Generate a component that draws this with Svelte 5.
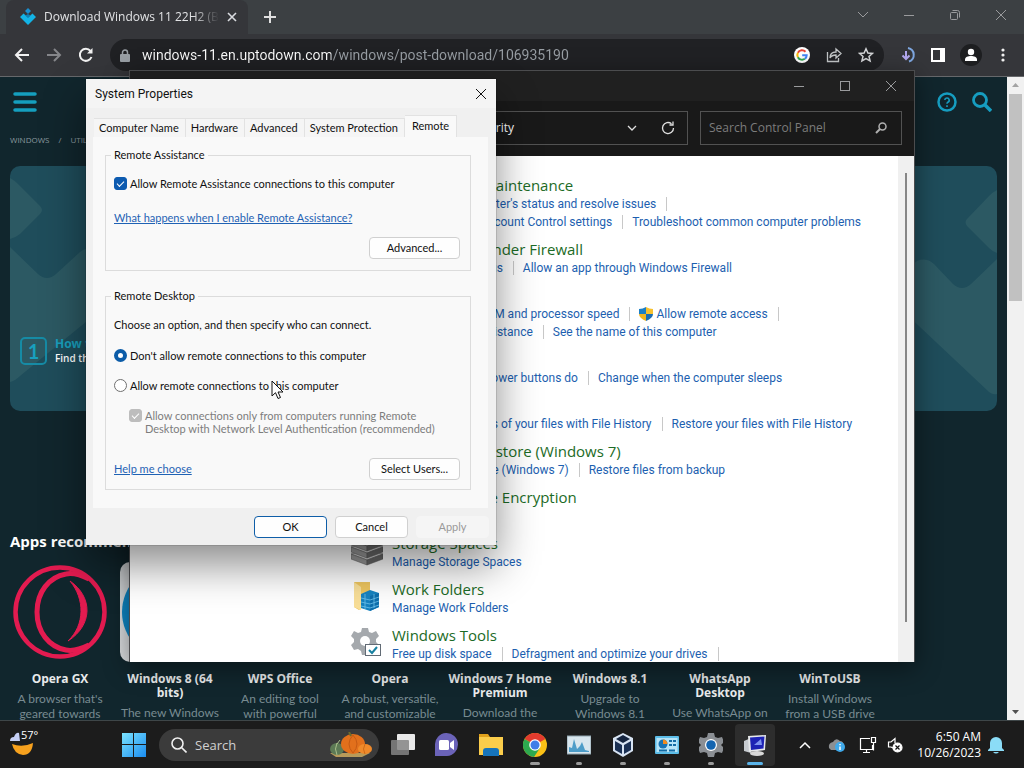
<script lang="ts">
  let address = $state('windows-11.en.uptodown.com/windows/post-download/106935190');
  let search = $state('');
  let taskSearch = $state('');
  let assistance = $state(true);
  let onlyNla = $state(true);
  let remote = $state('deny');

  const tabs = ['Computer Name', 'Hardware', 'Advanced', 'System Protection', 'Remote'];
  let activeTab = $state('Remote');

  const groups = [
    { title: 'Security and Maintenance', lines: [
      [{ label: "Review your computer's status and resolve issues" }],
      [{ label: 'Change User Account Control settings', shield: true }, { label: 'Troubleshoot common computer problems', last: true }]
    ] },
    { title: 'Windows Defender Firewall', lines: [
      [{ label: 'Check firewall status' }, { label: 'Allow an app through Windows Firewall', last: true }]
    ] },
    { title: 'System', lines: [
      [{ label: 'View amount of RAM and processor speed' }, { label: 'Allow remote access', shield: true }],
      [{ label: 'Launch remote assistance' }, { label: 'See the name of this computer', last: true }]
    ] },
    { title: 'Power Options', lines: [
      [{ label: 'Change what the power buttons do' }, { label: 'Change when the computer sleeps', last: true }]
    ] },
    { title: 'File History', lines: [
      [{ label: 'Save backup copies of your files with File History' }, { label: 'Restore your files with File History', last: true }]
    ] },
    { title: 'Backup and Restore (Windows 7)', lines: [
      [{ label: 'Backup and Restore (Windows 7)' }, { label: 'Restore files from backup', last: true }]
    ] },
    { title: 'BitLocker Drive Encryption', lines: [
      [{ label: 'Manage BitLocker', last: true }]
    ] },
    { title: 'Storage Spaces', icon: 'disks', lines: [
      [{ label: 'Manage Storage Spaces', last: true }]
    ] },
    { title: 'Work Folders', icon: 'folder', lines: [
      [{ label: 'Manage Work Folders', last: true }]
    ] },
    { title: 'Windows Tools', icon: 'tools', lines: [
      [{ label: 'Free up disk space' }, { label: 'Defragment and optimize your drives' }]
    ] }
  ] as any[];

  const apps = [
    { name: 'Opera GX', text: "A browser that's geared towards" },
    { name: 'Windows 8 (64 bits)', text: 'The new Windows' },
    { name: 'WPS Office', text: 'An editing tool with powerful' },
    { name: 'Opera', text: 'A robust, versatile, and customizable' },
    { name: 'Windows 7 Home Premium', text: 'Download the' },
    { name: 'Windows 8.1', text: 'Upgrade to Windows 8.1' },
    { name: 'WhatsApp Desktop', text: 'Use WhatsApp on' },
    { name: 'WinToUSB', text: 'Install Windows from a USB drive' }
  ];

  const taskApps = [
    { id: 'view', label: 'Task view', state: '' },
    { id: 'chat', label: 'Chat', state: '' },
    { id: 'files', label: 'File Explorer', state: '' },
    { id: 'chrome', label: 'Google Chrome', state: 'wide' },
    { id: 'monitor', label: 'Task Manager', state: 'open' },
    { id: 'box', label: 'VirtualBox', state: 'open' },
    { id: 'panel', label: 'Control Panel', state: 'open' },
    { id: 'settings', label: 'Settings', state: 'open' },
    { id: 'system', label: 'System Properties', state: 'active' }
  ];
</script>

<div class="desktop">
  <section class="browser">
    <div class="tabstrip">
      <div class="browser-tab">
        <svg width="16" height="18" viewBox="0 0 16 18">
          <path d="M8 0l3 3-3 3-3-3z" fill="#1a8fd0" />
          <path d="M0 9l3.500-3.500L8 9.500l4.500-4L16 9l-8 8z" fill="#13b4e6" />
          <path d="M5.500 7.500L8 10l2.500-2.500L8 6z" fill="#0f7fb4" />
        </svg>
        <span class="tab-title">Download Windows 11 22H2 (Build</span>
        <button class="plain" aria-label="Close tab">
          <svg width="10" height="10" viewBox="0 0 10 10" stroke="#dadce0" stroke-width="1.6"><path d="M1 1l8 8M9 1l-8 8" /></svg>
        </button>
      </div>
      <button class="plain new-tab" aria-label="New tab">
        <svg width="12" height="12" viewBox="0 0 12 12" stroke="#e0e0e0" stroke-width="2"><path d="M6 0v12M0 6h12" /></svg>
      </button>
      <div class="caption">
        <button class="plain" aria-label="Search tabs"><svg width="12" height="12" viewBox="0 0 12 12"><path d="M1 3l5 5 5-5" /></svg></button>
        <button class="plain" aria-label="Minimize"><svg width="12" height="12" viewBox="0 0 12 12"><path d="M1 6.500h10" /></svg></button>
        <button class="plain" aria-label="Restore"><svg width="12" height="12" viewBox="0 0 12 12"><rect x="1.500" y="3.500" width="7" height="7" rx="1" /><path d="M3.500 1.500h5a2 2 0 0 1 2 2v5" /></svg></button>
        <button class="plain" aria-label="Close"><svg width="12" height="12" viewBox="0 0 12 12"><path d="M1 1l10 10M11 1L1 11" /></svg></button>
      </div>
    </div>

    <div class="toolbar">
      <button class="plain nav" aria-label="Back"><svg width="16" height="16" viewBox="0 0 16 16" stroke="#f1f1f1"><path d="M15 8H2M8 2L2 8l6 6" /></svg></button>
      <button class="plain nav" aria-label="Forward"><svg width="16" height="16" viewBox="0 0 16 16" stroke="#85868a"><path d="M1 8h13M8 2l6 6-6 6" /></svg></button>
      <button class="plain nav" aria-label="Reload"><svg width="16" height="16" viewBox="0 0 16 16" stroke="#f1f1f1"><path d="M13.500 10A6 6 0 1 1 12.500 4" /><path d="M14.500 1v5.500H9z" fill="#f1f1f1" stroke="none" /></svg></button>
      <div class="omnibox">
        <svg width="10" height="13" viewBox="0 0 10 13"><rect y="5" width="10" height="8" rx="1" fill="#9aa0a6" /><path d="M2.500 6V3.500a2.500 2.500 0 0 1 5 0V6" fill="none" stroke="#9aa0a6" stroke-width="1.500" /></svg>
        <input class="url" type="text" aria-label="Address" bind:value={address} />
        <svg width="16" height="16" viewBox="0 0 16 16">
          <circle cx="8" cy="8" r="8" fill="#fff" />
          <g fill="none" stroke-width="2">
            <path d="M11.500 4.800A4.700 4.700 0 0 0 3.900 5.800" stroke="#ea4335" />
            <path d="M3.900 5.800a4.700 4.700 0 0 0 0 4.400" stroke="#fbbc05" />
            <path d="M3.900 10.200a4.700 4.700 0 0 0 7 1.600" stroke="#34a853" />
            <path d="M10.900 11.800A4.700 4.700 0 0 0 12.700 8.200H8.200" stroke="#4285f4" />
          </g>
        </svg>
        <svg width="16" height="16" viewBox="0 0 16 16" fill="none" stroke="#c4c7c9" stroke-width="1.300"><path d="M1.500 5v9.500h11V11" /><path d="M4 11c0-4 2-6 6-6V2l5 4.500-5 4.500V8c-3 0-5 1-6 3z" /></svg>
        <svg width="16" height="16" viewBox="0 0 16 16" fill="none" stroke="#d4d6d8" stroke-width="1.500"><path d="M8 1.800l1.900 4.200 4.600.4-3.500 3 1.100 4.500L8 11.500l-4.100 2.400L5 9.400l-3.500-3 4.600-.4z" /></svg>
      </div>
      <div class="toolbar-end">
        <svg width="16" height="16" viewBox="0 0 16 16" fill="none" stroke-width="2"><path d="M6 4v8M2.500 8.500L6 12l3.500-3.500" stroke="#b3a7ee" /><path d="M8 1a7 7 0 0 1 1 13.500" stroke="#7ea7e0" /></svg>
        <svg width="14" height="14" viewBox="0 0 14 14"><rect x="1" y="1" width="12" height="12" fill="none" stroke="#fff" stroke-width="2" /><path d="M9 0h5v14H9z" fill="#fff" /></svg>
        <svg width="22" height="22" viewBox="0 0 22 22"><circle cx="11" cy="11" r="11" fill="#1d1e20" /><circle cx="11" cy="8" r="3.200" fill="#fff" /><path d="M5 17v-1.500c0-2.500 3-3.500 6-3.500s6 1 6 3.500V17z" fill="#fff" /></svg>
        <svg class="more" width="4" height="14" viewBox="0 0 4 14" fill="#f1f1f1"><circle cx="2" cy="2" r="1.600" /><circle cx="2" cy="7" r="1.600" /><circle cx="2" cy="12" r="1.600" /></svg>
      </div>
    </div>

    <div class="page">
      <div class="site">
        <header>
          <button class="plain" aria-label="Menu"><svg width="24" height="20" viewBox="0 0 24 20" stroke="#159fbe" stroke-width="3.500" stroke-linecap="round"><path d="M2 2h20M2 10h20M2 18h20" /></svg></button>
          <span class="header-end">
            <button class="plain" aria-label="Help"><svg width="20" height="20" viewBox="0 0 20 20" fill="none" stroke="#169dc0"><circle cx="10" cy="10" r="8.500" stroke-width="2.500" /><path d="M7.800 8a2.200 2.200 0 1 1 3 2.200q-.8.400-.8 1.600M10 13.200v1.800" stroke-width="1.600" /></svg></button>
            <button class="plain" aria-label="Search"><svg width="20" height="20" viewBox="0 0 20 20" fill="none" stroke="#169dc0"><circle cx="8" cy="8" r="6.500" stroke-width="2.800" /><path d="M13 13l6 6" stroke-width="3.500" /></svg></button>
          </span>
        </header>
        <nav class="crumbs"><a href="#windows">WINDOWS</a><span>/</span><a href="#utilities">UTILITIES</a></nav>

        <div class="hero">
          <svg class="shape left" width="110" height="245" viewBox="0 0 110 245"><path d="M0 12q4 2 8 6l22 22q4 4 0 8L10 68q-5 4-10 5z" /><path d="M0 81l28 27q9 8 18 0l24-22q8-7 18 0l22 20v22L10 210q-5 5-10 6z" /></svg>
          <svg class="shape right" width="110" height="245" viewBox="0 0 110 245"><path d="M110 12q-4 2-8 6L80 41q-3 3 0 7l22 22q4 4 8 5z" /><path d="M110 81L84 106q-9 8-18 0L47 86q-8-7-17-3L0 108v10l102 96q4 3 8 2z" /></svg>
          <div class="step">
            <span class="number">1</span>
            <div><b>How to install</b><p>Find the file in the folder</p></div>
          </div>
        </div>

        <h2>Apps recommended for you</h2>
        <div class="apps">
          {#each apps as app, i}
            <a class="app" href="#app-{i}">
              {#if i == 0}
                <svg width="100" height="100" viewBox="-3 -3 100 100" fill="none" stroke="#e31b50">
                  <circle cx="47" cy="47" r="44.500" stroke-width="4.500" />
                  <path d="M76 14C66 9 58 8 53 9C36 12 24 27 24 47s12 35 29 38c5 1 13 0 23-5" stroke-width="5" />
                  <path d="M57 16C80 32 80 60 55 76 72 60 72 34 57 16z" fill="#e31b50" stroke-width="1" />
                </svg>
              {:else}
                <span class="tile"><span></span></span>
              {/if}
              <b>{app.name}</b>
              <p>{app.text}</p>
            </a>
          {/each}
        </div>
      </div>
      <div class="scrollbar">
        <svg width="17" height="17" viewBox="0 0 17 17" fill="#a3a3a3"><path d="M5 10h7L8.500 6z" /></svg>
        <div class="thumb"></div>
        <svg width="17" height="17" viewBox="0 0 17 17" fill="#505050"><path d="M5 7h7l-3.500 4z" /></svg>
      </div>
    </div>
  </section>

  <section class="panel-window">
    <div class="panel-title">
      <svg width="16" height="16" viewBox="0 0 16 16"><path d="M0 1h16v12H0z" fill="#4a4a4a" /></svg>
      <div class="caption">
        <button class="plain" aria-label="Minimize"><svg width="12" height="12" viewBox="0 0 12 12"><path d="M1 6.500h10" /></svg></button>
        <button class="plain" aria-label="Maximize"><svg width="12" height="12" viewBox="0 0 12 12"><rect x="1.500" y="1.500" width="9" height="9" /></svg></button>
        <button class="plain" aria-label="Close"><svg width="12" height="12" viewBox="0 0 12 12"><path d="M1 1l10 10M11 1L1 11" /></svg></button>
      </div>
    </div>
    <div class="panel-bar">
      <div class="path">
        <span>Control Panel</span><span>›</span><span>System and Security</span>
        <button class="plain" aria-label="Previous locations"><svg width="10" height="10" viewBox="0 0 10 10" fill="none" stroke="#e0e0e0" stroke-width="1.300"><path d="M1 3l4 4 4-4" /></svg></button>
        <button class="plain" aria-label="Refresh"><svg width="14" height="14" viewBox="0 0 14 14" fill="none" stroke="#e0e0e0" stroke-width="1.300"><path d="M12.500 7A5.500 5.500 0 1 1 10.500 2.800M12 .5v3.500H8.500" /></svg></button>
      </div>
      <label class="panel-search">
        <input type="text" aria-label="Search Control Panel" placeholder="Search Control Panel" bind:value={search} />
        <svg width="12" height="12" viewBox="0 0 12 12" fill="none" stroke="#b0b0b0"><circle cx="7.500" cy="4.500" r="3.500" stroke-width="1.500" /><path d="M5 7L1 11" stroke-width="2" /></svg>
      </label>
    </div>
    <div class="panel-body">
      <main>
        {#each groups as group}
          <div class="group">
            <div class="group-icon">
              {#if group.icon == 'disks'}
                <svg width="32" height="32" viewBox="0 0 32 32" stroke="#555" stroke-width=".5">
                  {#each [20, 13, 6] as y}
                    <path d="M0 {y}l16-5 16 5-16 6z" fill="#d2d2d2" /><path d="M0 {y}l16 6v5L0 {y + 5}z" fill="#999" /><path d="M32 {y}l-16 6v5l16-6z" fill="#686868" />
                  {/each}
                </svg>
              {:else if group.icon == 'folder'}
                <svg width="32" height="32" viewBox="0 0 32 32">
                  <path d="M3 2h16v20L8 30l-5-3z" fill="#eec65f" /><path d="M3 2l7 5v23l-7-3z" fill="#f9df98" />
                  <path d="M10 14l9-4 9 3v14l-9 4-9-3z" fill="#1683c0" /><path d="M19 16l9-3v14l-9 4z" fill="#0e6fad" /><path d="M10 18l9 2 9-3M10 22l9 2 9-3M10 26l9 2 9-3M14 14v15M23 14v14" fill="none" stroke="#6ec3ec" stroke-width=".8" />
                </svg>
              {:else if group.icon == 'tools'}
                <svg width="32" height="32" viewBox="0 0 32 32">
                  <path d="M11 2h6l1 4 3 1 4-2 3 5-3 3v3l3 3-3 5-4-1-3 2-1 4h-6l-1-4-3-2-4 1-3-5 3-3v-3l-3-3 3-5 4 2 3-1z" fill="#a5a9ad" /><circle cx="14" cy="15" r="5" fill="#fff" />
                  <rect x="14.500" y="18.500" width="15" height="11" fill="#fff" stroke="#626b75" /><path d="M18 24l3 3 5-6" fill="none" stroke="#1780a0" stroke-width="2" />
                </svg>
              {/if}
            </div>
            <div>
              <h3>{group.title}</h3>
              {#each group.lines as line}
                <div class="links">
                  {#each line as link}
                    <a href="#link" class:last={link.last}>
                      {#if link.shield}
                        <svg width="14" height="14" viewBox="0 0 14 14"><path d="M7 0v7H0V2q4 0 7-2z" fill="#1c7fc4" /><path d="M7 0v7h7V2q-4 0-7-2z" fill="#f6c12f" /><path d="M0 7h7v7Q0 11 0 7z" fill="#f1b51f" /><path d="M14 7H7v7q7-3 7-7z" fill="#1b6db3" /></svg>
                      {/if}{link.label}</a>
                  {/each}
                </div>
              {/each}
            </div>
          </div>
        {/each}
      </main>
      <div class="panel-scroll"><div></div></div>
    </div>
  </section>

  <section class="dialog" role="dialog" aria-label="System Properties">
    <div class="dialog-title">
      <span>System Properties</span>
      <button class="plain" aria-label="Close"><svg width="12" height="12" viewBox="0 0 12 12" stroke="#111"><path d="M1 1l10 10M11 1L1 11" /></svg></button>
    </div>
    <div class="tabs" role="tablist">
      {#each tabs as tab}
        <button role="tab" class:active={activeTab == tab} aria-selected={activeTab == tab} onclick={() => (activeTab = tab)}>{tab}</button>
      {/each}
    </div>
    <div class="sheet">
      <fieldset>
        <legend>Remote Assistance</legend>
        <label class="option"><input type="checkbox" bind:checked={assistance} />Allow Remote Assistance connections to this computer</label>
        <a class="help" href="#help">What happens when I enable Remote Assistance?</a>
        <div class="right"><button class="btn">Advanced...</button></div>
      </fieldset>
      <fieldset class="remote-desktop">
        <legend>Remote Desktop</legend>
        <p>Choose an option, and then specify who can connect.</p>
        <label class="option"><input type="radio" name="remote" value="deny" bind:group={remote} />Don't allow remote connections to this computer</label>
        <label class="option"><input type="radio" name="remote" value="allow" bind:group={remote} />Allow remote connections to this computer</label>
        <label class="option sub"><input type="checkbox" disabled bind:checked={onlyNla} /><span>Allow connections only from computers running Remote<br />Desktop with Network Level Authentication (recommended)</span></label>
        <div class="between"><a class="help" href="#choose">Help me choose</a><button class="btn">Select Users...</button></div>
      </fieldset>
    </div>
    <div class="actions">
      <button class="btn default">OK</button>
      <button class="btn">Cancel</button>
      <button class="btn" disabled>Apply</button>
    </div>
  </section>

  <svg class="cursor" width="13" height="20" viewBox="0 0 13 20"><path d="M1 1v15l3.500-3.300L7 18.500l2.500-1L7 12h5z" fill="#fff" stroke="#111" /></svg>

  <footer class="taskbar">
    <button class="plain weather" aria-label="Weather">
      <svg width="32" height="28" viewBox="0 0 32 28"><path d="M2 15q10 4 21-1-1 12-10 12Q4 25 2 15z" fill="#f6a11e" /><path d="M0 12q0-4 4-4 2-5 5-4l1 8z" fill="#c5cff5" /></svg>
      <span>57°</span>
    </button>
    <button class="plain item" aria-label="Start">
      <svg width="24" height="24" viewBox="0 0 24 24"><defs><linearGradient id="win" x2="1" y2="1"><stop stop-color="#7be3ff" /><stop offset="1" stop-color="#1a8cf0" /></linearGradient></defs><path d="M0 0h11v11H0zM12 0h12v11H12zM0 12h11v12H0zM12 12h12v12H12z" fill="url(#win)" /></svg>
    </button>
    <label class="task-search">
      <svg width="16" height="16" viewBox="0 0 16 16" fill="none" stroke="#f0f0f0" stroke-width="1.600"><circle cx="6.500" cy="6.500" r="5.500" /><path d="M10.500 10.500l5 5" /></svg>
      <input type="text" aria-label="Search" placeholder="Search" bind:value={taskSearch} />
      <svg width="46" height="26" viewBox="0 0 46 26">
        <path d="M2 21h40l-8 4H8z" fill="#b79a5a" />
        <ellipse cx="9" cy="17" rx="7" ry="6" fill="#5d7a55" /><path d="M9 11q-3 6 0 12M12 8l-3 4" stroke="#a9bf8a" fill="none" />
        <ellipse cx="25" cy="12" rx="12" ry="10" fill="#e2701c" /><path d="M25 3q-8 9 0 18M25 3q8 9 0 18" stroke="#c65a14" fill="none" /><path d="M23 4l-2-4" stroke="#6d6a2c" stroke-width="2" />
        <ellipse cx="37" cy="17" rx="7" ry="5" fill="#f08a2a" /><path d="M37 12q-3 5 0 10" stroke="#cf6a17" fill="none" />
      </svg>
    </label>
    {#each taskApps as app}
      <button class="plain item {app.state}" aria-label={app.label}>
        <svg width="24" height="24" viewBox="0 0 24 24">
          {#if app.id == 'view'}
            <rect x="6" y="1" width="18" height="16" rx="1" fill="#e9e9e9" /><rect x="0" y="7" width="18" height="15" rx="1" fill="#858585" opacity=".85" />
          {:else if app.id == 'chat'}
            <path d="M0 23V12a11.500 11.500 0 1 1 12 11z" fill="#6b63b8" /><rect x="4" y="7" width="10" height="10" rx="1.500" fill="#fff" /><path d="M15 10l4-3v10l-4-3z" fill="#fff" />
          {:else if app.id == 'files'}
            <path d="M0 1h9l2 3H0z" fill="#e0a11c" /><path d="M0 4h24v18H0z" fill="#fbcd4b" /><path d="M4 23v-5q0-3 3-3h10q3 0 3 3v5z" fill="#1674bb" />
          {:else if app.id == 'chrome'}
            <circle cx="12" cy="12" r="12" fill="#fbc116" /><path d="M12 12L1.600 6A12 12 0 0 1 22.400 6z" fill="#e33b2e" /><path d="M12 12L1.600 6A12 12 0 0 0 11 24l6-9z" fill="#2da94f" /><circle cx="12" cy="12" r="5.800" fill="#fff" /><circle cx="12" cy="12" r="4.500" fill="#3f7ee8" />
          {:else if app.id == 'monitor'}
            <rect x="0" y="3" width="24" height="18" fill="#d8e6ee" stroke="#8fa3ad" /><path d="M2 19V14l3 1 2-9 3 10 3-3 2-4 3 8 4 1v1z" fill="#4d9cc8" />
          {:else if app.id == 'box'}
            <path d="M12 0l10 5v13l-10 6-10-6V5z" fill="#d8e4f3" /><path d="M12 2l7 4-7 4-7-4z" fill="#14243f" /><path d="M4 8l7 4v9l-7-4zM20 8l-7 4v9l7-4z" fill="#1a3054" />
          {:else if app.id == 'panel'}
            <rect x="0" y="3" width="24" height="18" rx="1" fill="#5cbde8" /><rect x="1.500" y="5" width="21" height="14" fill="#b6e4f8" /><circle cx="8" cy="11" r="4.500" fill="#1773b5" /><path d="M8 11V6.500a4.500 4.500 0 0 1 4.500 4.500z" fill="#f08a1d" /><path d="M14 8h3M18 8h3M14 12h3M18 12h3M4 17.500h8M14 17.500h6" stroke="#146ca5" stroke-width="2" />
          {:else if app.id == 'settings'}
            <path d="M9 0h6l1 4 3 1 4-1 2 5-3 3 3 3-2 5-4-1-3 1-1 4H9l-1-4-3-1-4 1-2-5 3-3-3-3 2-5 4 1 3-1z" fill="#8b8f94" /><circle cx="12" cy="12" r="6" fill="#fff" /><circle cx="12" cy="12" r="4.800" fill="#1465b0" />
          {:else}
            <path d="M1 8l7-3v15l-7-2z" fill="#c7cbd0" /><path d="M5 3l18-1-1 15-16 2z" fill="#e6e8ea" /><path d="M7 4.500L21.500 3.500 20.500 15.500 8 17z" fill="#1d22b4" /><path d="M11 12l7-6 1 6z" fill="#7d92ef" /><ellipse cx="14" cy="20.500" rx="7" ry="2.500" fill="#d8d8d8" />
          {/if}
        </svg>
      </button>
    {/each}
    <div class="tray">
      <svg class="chevron" width="12" height="12" viewBox="0 0 12 12" fill="none" stroke="#fff" stroke-width="1.500"><path d="M1 9l5-5 5 5" /></svg>
      <svg class="cloud" width="18" height="16" viewBox="0 0 18 16"><path d="M1 11q-1-5 4-6 3-5 7-1 3 0 4 4l-5 5H3z" fill="#8c8f92" /><circle cx="12" cy="10" r="5" fill="#3fa9ea" /><path d="M12 9.500V13M12 7v1.300" stroke="#fff" stroke-width="1.500" /></svg>
      <svg width="18" height="18" viewBox="0 0 18 18" fill="none" stroke="#fff" stroke-width="1.200"><path d="M11 2.500H1.500v11h12V9M4 16.500h7M7.500 13.500v3M12.500 1.500h4v5h-4zM14.500 6.500v8" /></svg>
      <svg width="16" height="16" viewBox="0 0 16 16" fill="none" stroke="#fff" stroke-width="1.200"><path d="M6 11L4 10H1.500V5H4l4-3.500V6" /><circle cx="10.500" cy="10.500" r="4.500" fill="#fff" /><path d="M8.500 8.500l4 4M12.500 8.500l-4 4" stroke="#111" /></svg>
      <time><span>6:50 AM</span><span>10/26/2023</span></time>
      <svg width="16" height="18" viewBox="0 0 16 18" fill="#8bdcf7"><path d="M2 12V7a6 6 0 0 1 12 0v5l2 2v1H0v-1zM5 16h6q-3 3-6 0z" /></svg>
    </div>
  </footer>
</div>

<style>
  :global(body) {
    margin: 0;
    background: #10242b;
  }

  .desktop {
    position: relative;
    display: flex;
    flex-direction: column;
    height: 100vh;
    min-height: 600px;
    overflow: hidden;
    font: 12px/16px "Open Sans", "Noto Sans", sans-serif;
  }

  h2, h3, p, fieldset {
    margin: 0;
  }

  svg {
    display: block;
    flex: none;
  }

  input {
    min-width: 0;
    margin: 0;
    border: 0;
    padding: 0;
    background: none;
    font: inherit;
    outline: none;
  }

  .plain {
    display: flex;
    align-items: center;
    justify-content: center;
    flex: none;
    border: 0;
    padding: 0;
    background: none;
    font: inherit;
  }

  .browser {
    display: flex;
    flex-direction: column;
    flex: 1;
    min-height: 0;
  }

  .tabstrip {
    display: flex;
    height: 34px;
    padding-left: 6px;
    background: #3c4043;
  }
  .browser-tab {
    display: flex;
    align-items: center;
    gap: 8px;
    width: 242px;
    box-sizing: border-box;
    padding: 0 11px 0 14px;
    border-radius: 8px 8px 0 0;
    background: #35363a;
    color: #e2e3e5;
  }
  .tab-title {
    flex: 1;
    overflow: hidden;
    white-space: nowrap;
    mask-image: linear-gradient(to right, #000 85%, transparent);
  }
  .new-tab {
    width: 44px;
  }

  .caption {
    display: flex;
    margin-left: auto;
    height: 29px;
  }
  .caption .plain {
    width: 46px;
  }
  .caption svg {
    fill: none;
    stroke: #9a9b9d;
  }

  .toolbar {
    display: flex;
    align-items: center;
    height: 42px;
    padding: 0 19px 0 6px;
    border-bottom: 1px solid #66686b;
    background: #35363a;
  }
  .nav {
    width: 32px;
    height: 32px;
  }
  .nav svg {
    fill: none;
    stroke-width: 2;
  }
  .omnibox {
    display: flex;
    align-items: center;
    flex: 1;
    gap: 16px;
    height: 32px;
    margin: 0 16px 0 8px;
    padding: 0 10px;
    border-radius: 16px;
    background: #202124;
  }
  .url {
    flex: 1;
    margin-left: -4px;
    font-family: Roboto, sans-serif;
    font-size: 14px;
    color: transparent;
    background: linear-gradient(to right, #fff 189px, #9aa0a6 189px);
    background-clip: text;
  }
  .toolbar-end {
    display: flex;
    align-items: center;
    gap: 15px;
  }
  .more {
    margin-left: 4px;
  }

  .page {
    display: flex;
    flex: 1;
    min-height: 0;
  }
  .site {
    flex: 1;
    overflow: hidden;
    padding: 0 10px;
    background: #11262d;
    color: #fff;
  }
  .site header {
    display: flex;
    justify-content: space-between;
    padding: 15px 5px 0 3px;
  }
  .header-end {
    display: flex;
    gap: 15px;
  }
  .crumbs {
    display: flex;
    gap: 9px;
    margin-top: 20px;
    color: #8b9a9f;
    font-size: 8px;
  }
  .crumbs a {
    color: inherit;
    text-decoration: none;
  }
  .hero {
    position: relative;
    height: 245px;
    margin-top: 18px;
    overflow: hidden;
    border-radius: 10px;
    background: #1f4d5b;
  }
  .shape {
    position: absolute;
    top: 0;
    fill: #2c5963;
  }
  .shape.left {
    left: 0;
  }
  .shape.right {
    right: 0;
  }
  .step {
    position: relative;
    display: flex;
    gap: 8px;
    padding: 171px 10px 0;
    line-height: 14px;
  }
  .step b {
    color: #189fbe;
  }
  .step p {
    font-size: 10px;
    font-weight: 600;
  }
  .number {
    width: 23px;
    height: 24px;
    border: 2px solid #168ba5;
    border-radius: 5px;
    color: #189fbe;
    font: bold 20px/24px Lato, sans-serif;
    text-align: center;
  }
  .site h2 {
    margin-top: 120px;
    font-size: 15px;
    line-height: 20px;
  }
  .apps {
    display: flex;
    gap: 10px;
    margin-top: 11px;
  }
  .app {
    flex: none;
    width: 100px;
    color: #788b91;
    font: 12px/15px Lato, sans-serif;
    text-align: center;
    text-decoration: none;
  }
  .app b {
    display: block;
    margin: 10px -5px 5px;
    color: #e8eaeb;
    font: bold 12px/14px "Open Sans", sans-serif;
  }
  .tile {
    display: flex;
    align-items: center;
    justify-content: center;
    height: 100px;
    border-radius: 10px;
    background: #d9dcde;
  }
  .tile span {
    width: 96px;
    height: 96px;
    border-radius: 50%;
    background: #0e86c4;
  }
  .scrollbar {
    display: flex;
    flex-direction: column;
    width: 17px;
    background: #f1f1f1;
  }
  .thumb {
    flex: 1;
    margin: 0 2px;
    background: linear-gradient(#c1c1c1 34%, transparent 34%);
  }

  .panel-window {
    position: absolute;
    inset: 70px 109px 106px 129px;
    display: flex;
    flex-direction: column;
    border: 1px solid #4b4c4e;
    border-bottom: 0;
    background: #191919;
    box-shadow: 0 6px 24px rgba(0, 0, 0, .45);
    color: #fff;
  }
  .panel-title {
    display: flex;
    padding-left: 9px;
    background: #202020;
  }
  .panel-title > svg {
    margin-top: 7px;
  }
  .panel-title .caption {
    height: 30px;
  }
  .panel-bar {
    display: flex;
    gap: 12px;
    padding: 10px 12px 11px 140px;
  }
  .path, .panel-search {
    display: flex;
    align-items: center;
    height: 32px;
    border: 1px solid #525252;
  }
  .path {
    flex: 1;
    gap: 10px;
    padding: 0 12px 0 31px;
  }
  .path .plain:first-of-type {
    margin-left: auto;
    margin-right: 14px;
  }
  .panel-search {
    width: 200px;
  }
  .panel-search input {
    flex: 1;
    padding-left: 8px;
    color: #fff;
  }
  .panel-search input::placeholder {
    color: #7c7c7c;
    opacity: 1;
  }
  .panel-search svg {
    margin-right: 14px;
  }
  .panel-body {
    display: flex;
    flex: 1;
    min-height: 0;
    background: #fff;
  }
  main {
    flex: 1;
    overflow: hidden;
    padding: 20px 0 0 221px;
  }
  .group {
    display: flex;
    gap: 9px;
    margin-bottom: 9px;
  }
  .group-icon {
    width: 32px;
  }
  h3 {
    margin-bottom: 1px;
    color: #1c6b26;
    font-size: 15px;
    font-weight: 400;
    line-height: 18px;
    white-space: nowrap;
  }
  .links {
    display: flex;
    height: 18px;
    align-items: center;
    font-family: Roboto, sans-serif;
    white-space: nowrap;
  }
  .links a {
    display: flex;
    align-items: center;
    gap: 3px;
    margin-right: 9px;
    padding-right: 10px;
    border-right: 1px solid #c8c8c8;
    color: #1d5fb0;
    line-height: 14px;
    text-decoration: none;
  }
  .links a.last {
    border: 0;
  }
  .panel-scroll {
    width: 16px;
    padding: 17px 0 40px;
    box-sizing: border-box;
    background: #f0f0f0;
  }
  .panel-scroll div {
    width: 2px;
    height: 100%;
    margin-left: 7px;
    background: #868686;
  }

  .dialog {
    position: absolute;
    top: 79px;
    left: 86px;
    width: 410px;
    background: #f0f0f0;
    box-shadow: 0 0 1px rgba(0, 0, 0, .6), 0 20px 40px rgba(0, 0, 0, .45);
    color: #111;
    font: 11px/14px Lato, "Liberation Sans", sans-serif;
  }
  .dialog-title {
    display: flex;
    align-items: center;
    justify-content: space-between;
    height: 29px;
    padding: 0 9px;
    background: #f4f4f4;
    font: 12px/16px Roboto, sans-serif;
  }
  .tabs {
    display: flex;
    align-items: flex-end;
    height: 29px;
    padding-left: 8px;
  }
  .tabs button {
    height: 19px;
    border: 1px solid #e2e2e2;
    border-left: 0;
    border-bottom: 0;
    padding: 0 6px 0 5px;
    background: #f5f5f5;
    color: inherit;
    font: inherit;
    white-space: nowrap;
  }
  .tabs .active {
    height: 22px;
    padding: 0 7px 2px;
    background: #f9f9f9;
  }
  .sheet {
    margin: 0 8px 0 7px;
    padding: 11px 17px 18px 12px;
    background: #f9f9f9;
  }
  fieldset {
    min-width: 0;
    border: 1px solid #dcdcdc;
    padding: 0 10px 11px 8px;
  }
  .remote-desktop {
    margin-top: 18px;
    padding-bottom: 9px;
  }
  .remote-desktop p {
    margin: 15px 0 17px;
  }
  .remote-desktop .option + .option {
    margin-top: 16px;
  }
  legend {
    margin-left: -3px;
    padding: 0 3px;
  }
  .option {
    display: flex;
    gap: 3px;
    margin-top: 15px;
  }
  .option input {
    display: grid;
    flex: none;
    place-items: center;
    width: 13px;
    height: 13px;
    appearance: none;
    border: 1px solid #707070;
    background: #fff;
  }
  .option input[type="checkbox"] {
    border-radius: 3px;
  }
  .option input[type="checkbox"]:checked {
    border-color: #0d5bb0;
    background: #0d5bb0;
  }
  .option input[type="checkbox"]:checked::after {
    content: "";
    width: 6px;
    height: 3px;
    border: solid #fff;
    border-width: 0 0 1px 1px;
    transform: translateY(-1px) rotate(-45deg);
  }
  .option input[type="checkbox"]:disabled {
    border-color: #bdbdbd;
    background: #bdbdbd;
  }
  .option input[type="radio"] {
    border-radius: 50%;
  }
  .option input[type="radio"]:checked {
    border: 4px solid #0c5ca8;
  }
  .sub {
    padding-left: 15px;
    color: #7d7d7d;
    line-height: 13px;
  }
  .help {
    display: inline-block;
    color: #1f62b4;
  }
  fieldset > .help {
    margin-top: 20px;
  }
  .right {
    display: flex;
    justify-content: flex-end;
    margin-top: 12px;
  }
  .between {
    display: flex;
    align-items: center;
    justify-content: space-between;
    margin-top: 23px;
  }
  .btn {
    width: 91px;
    height: 22px;
    border: 1px solid #d0d0d0;
    border-radius: 4px;
    padding: 0;
    background: #fefefe;
    color: #111;
    font: inherit;
  }
  .actions {
    display: flex;
    justify-content: flex-end;
    gap: 8px;
    padding: 8px 7px 7px;
  }
  .actions .btn {
    width: 73px;
  }
  .actions .default {
    border-color: #0f5ea8;
  }
  .btn:disabled {
    border-color: #f5f5f5;
    background: #f5f5f5;
    color: #999;
  }

  .cursor {
    position: absolute;
    top: 380px;
    left: 271px;
  }

  .taskbar {
    display: flex;
    align-items: center;
    flex: none;
    height: 47px;
    border-top: 1px solid #3e4648;
    background: #1c1c1c;
    color: #fff;
  }
  .weather {
    position: relative;
    width: 112px;
    height: 47px;
    padding: 0 0 4px 10px;
    justify-content: flex-start;
    color: #fff;
    font-size: 11px;
  }
  .weather span {
    position: absolute;
    top: 6px;
    left: 21px;
  }
  .item {
    position: relative;
    width: 44px;
    height: 42px;
  }
  .item::after {
    position: absolute;
    bottom: 1px;
    left: 50%;
    height: 3px;
    border-radius: 2px;
    background: #9a9a9a;
    transform: translateX(-50%);
  }
  .open::after {
    content: "";
    width: 6px;
  }
  .wide::after {
    content: "";
    width: 10px;
  }
  .active.item::after {
    content: "";
    width: 16px;
    background: #5ab4ea;
  }
  .active.item {
    width: 40px;
    margin: 0 2px;
    border-radius: 4px;
    background: #2d2d2d;
  }
  .task-search {
    display: flex;
    align-items: center;
    width: 220px;
    height: 32px;
    box-sizing: border-box;
    margin: 0 2px 0 3px;
    padding: 0 5px 0 12px;
    border-radius: 16px;
    background: #3b3b3b;
  }
  .task-search input {
    flex: 1;
    margin-left: 8px;
    color: #fff;
    font-size: 13px;
  }
  .task-search input::placeholder {
    color: #d0d0d0;
    opacity: 1;
  }
  .tray {
    display: flex;
    align-items: center;
    gap: 10px;
    margin-left: auto;
    padding-right: 20px;
  }
  .chevron {
    margin-right: 7px;
  }
  .cloud {
    margin-right: 3px;
  }
  time {
    display: flex;
    flex-direction: column;
    align-items: flex-end;
    margin: 0 -3px 0 4px;
  }
</style>
